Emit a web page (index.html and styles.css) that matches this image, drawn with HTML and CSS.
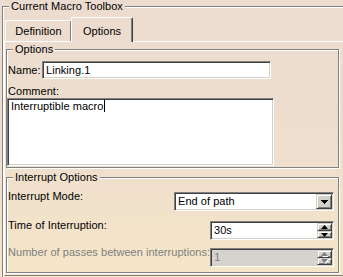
FILE: index.html
```html
<!DOCTYPE html>
<html lang="en">
<head>
    <meta charset="UTF-8">
    <meta name="viewport" content="width=device-width, initial-scale=1.0">
    <title>Current Macro Toolbox</title>
    <link rel="stylesheet" href="styles.css">
</head>
<body>
    <div class="toolbox">
        <div class="group-head"><span>Current Macro Toolbox</span></div>
        <div class="toolbox-body">
            <div class="tabs">
                <div class="tab tab-def">Definition</div>
                <div class="tab tab-active">Options</div>
            </div>
            <div class="panel">
                <div class="group">
                    <div class="group-head"><span>Options</span></div>
                    <div class="group-body options-body">
                        <div class="name-row">
                            <label>Name:</label>
                            <div class="field name-field">Linking.1</div>
                        </div>
                        <label class="comment-label">Comment:</label>
                        <div class="field comment">Interruptible macro<span class="caret"></span></div>
                    </div>
                </div>

                <div class="group interrupt">
                    <div class="group-head"><span>Interrupt Options</span></div>
                    <div class="group-body interrupt-body">
                        <div class="row row-mode">
                            <label>Interrupt Mode:</label>
                            <div class="field select">
                                <span class="value">End of path</span>
                                <span class="btn drop-btn">
                                    <svg width="7" height="4" viewBox="0 0 7 4"><polygon points="0,0 7,0 3.5,4" fill="#000" shape-rendering="crispEdges"/></svg>
                                </span>
                            </div>
                        </div>
                        <div class="row row-time">
                            <label>Time of Interruption:</label>
                            <div class="field spin">
                                <span class="value">30s</span>
                                <span class="spin-btns">
                                    <span class="btn spin-btn"><svg width="7" height="4" viewBox="0 0 7 4"><polygon points="3.5,0 7,4 0,4" fill="#000"/></svg></span>
                                    <span class="btn spin-btn"><svg width="7" height="4" viewBox="0 0 7 4"><polygon points="0,0 7,0 3.5,4" fill="#000"/></svg></span>
                                </span>
                            </div>
                        </div>
                        <div class="row row-passes disabled">
                            <label>Number of passes between interruptions:</label>
                            <div class="field spin">
                                <span class="value">1</span>
                                <span class="spin-btns">
                                    <span class="btn spin-btn"><svg width="7" height="5" viewBox="0 0 7 5"><polygon points="4.5,1 8,5 1,5" fill="#fff"/><polygon points="3.5,0 7,4 0,4" fill="#808080"/></svg></span>
                                    <span class="btn spin-btn"><svg width="7" height="5" viewBox="0 0 7 5"><polygon points="1,1 8,1 4.5,5" fill="#fff"/><polygon points="0,0 7,0 3.5,4" fill="#808080"/></svg></span>
                                </span>
                            </div>
                        </div>
                    </div>
                </div>
            </div>
        </div>
    </div>
</body>
</html>
```

FILE: styles.css
```css
body {
    margin: 0;
    height: 277px;
    overflow: hidden;
    font-family: "Liberation Sans", Arial, sans-serif;
    font-size: 11px;
    letter-spacing: 0.04px;
    color: #000;
    background: linear-gradient(#ecdcd0, #eedecd 55%, #f5e6c8);
}

/* etched group box */
.group-head {
    display: flex;
    height: 13px;
    line-height: 13px;
    white-space: nowrap;
}

.group-head::before,
.group-head::after {
    content: '';
    align-self: flex-end;
    height: 6px;
    border-top: 1px solid #808080;
}

.group-head::before {
    width: 6px;
    border-left: 1px solid #808080;
    box-shadow: inset 1px 1px 0 #fff;
}

.group-head::after {
    flex: 1;
    border-right: 1px solid #808080;
    box-shadow: inset 0 1px 0 #fff, 1px 0 0 #fff;
}

.group-head span {
    padding: 0 2px;
}

.group {
    width: 333px;
}

.group-body {
    border: 1px solid #808080;
    border-top: none;
    box-shadow: inset 1px 0 0 #fff, 1px 1px 0 #fff;
}

/* outer box, runs past the window edge */
.toolbox {
    margin-left: 2px;
    width: 341px;
}

.toolbox > .group-head::after {
    border-right: none;
    box-shadow: inset 0 1px 0 #fff;
}

.toolbox-body {
    box-sizing: border-box;
    height: 264px;
    border-left: 1px solid #808080;
    box-shadow: inset 1px 0 0 #fff;
    padding-left: 1px;
}

/* tabs */
.tabs {
    display: flex;
    align-items: flex-end;
    height: 28px;
    padding-left: 1px;
}

.tab {
    box-sizing: border-box;
    line-height: 13px;
    text-align: center;
    border: 1px solid;
    border-color: #fff #404040 transparent #fff;
    border-bottom: none;
    border-radius: 2px 2px 0 0;
    box-shadow: inset -1px 0 0 #808080;
}

.tab-def {
    width: 67px;
    height: 21px;
    padding-top: 4px;
}

.tab-active {
    position: relative;
    z-index: 1;
    width: 62px;
    height: 25px;
    margin-left: -1px;
    margin-bottom: -1px;
    padding-top: 7px;
    background: #ecdccf;
}

.panel {
    border-top: 1px solid #fff;
    border-left: 1px solid #fff;
    border-bottom: 1px solid #808080;
    padding: 1px 0 2px 1px;
}

/* fields */
.field {
    box-sizing: border-box;
    display: flex;
    background: #fff;
    border: 1px solid;
    border-color: #808080 #fff #fff #808080;
    padding: 1px;
    box-shadow: inset 1px 1px 0 #404040, inset -1px -1px 0 #d4d0c8;
}

.btn {
    box-sizing: border-box;
    display: flex;
    align-items: center;
    justify-content: center;
    background: #d4d0c8;
    border: 1px solid;
    border-color: #d4d0c8 #404040 #404040 #d4d0c8;
    box-shadow: inset 1px 1px 0 #fff, inset -1px -1px 0 #808080;
}

/* options group */
.options-body {
    padding: 5px 0 1px 0;
}

.name-row {
    display: flex;
    align-items: center;
}

.name-row label {
    width: 34px;
    padding-left: 1px;
}

.name-field {
    width: 229px;
    height: 18px;
    line-height: 14px;
    padding-left: 3px;
}

.comment-label {
    display: block;
    margin-top: 5px;
    padding-left: 1px;
    line-height: 14px;
}

.comment {
    width: 267px;
    height: 68px;
    line-height: 13px;
    padding: 1px 3px;
    align-items: flex-start;
}

.caret {
    width: 1px;
    height: 12px;
    margin-left: 1px;
    background: #000;
}

/* interrupt group */
.interrupt {
    margin-top: 3px;
}

.interrupt-body {
    padding: 8px 4px 5px 1px;
}

.row {
    display: flex;
    justify-content: space-between;
    align-items: flex-start;
}

.row label {
    margin-top: -2px;
    line-height: 13px;
    white-space: nowrap;
}

.row-mode {
    margin-bottom: 10px;
}

.row-time {
    margin-bottom: 8px;
}

.select {
    width: 160px;
    height: 19px;
}

.spin {
    width: 124px;
    height: 19px;
}

.value {
    flex: 1;
    line-height: 15px;
    padding-left: 2px;
}

.drop-btn {
    width: 16px;
    height: 15px;
}

.spin-btns {
    display: flex;
    flex-direction: column;
    width: 15px;
}

.spin-btn {
    height: 8px;
}

.spin-btn + .spin-btn {
    height: 7px;
}

.disabled label,
.disabled .value {
    color: #808080;
}

.disabled .field {
    background: #d6d3ce;
}
```
